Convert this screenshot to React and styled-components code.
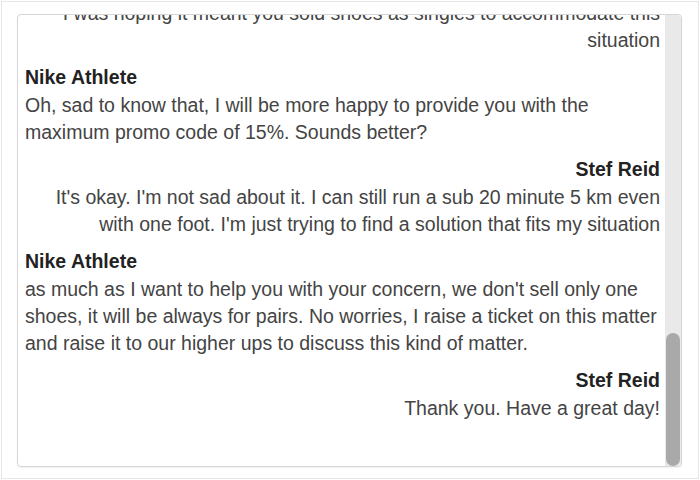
import React from 'react';
import styled, { createGlobalStyle } from 'styled-components';

const GlobalStyle = createGlobalStyle`
  html, body { margin: 0; padding: 0; background: #ffffff; }
  body { font-family: "Liberation Sans", Arial, sans-serif; }
`;

const Page = styled.div`
  box-sizing: border-box;
  width: 698px;
  height: 478px;
  margin: 1px;
  border: 1px solid #e6e6e6;
  padding: 12px 0 0 15px;
`;

const ChatBox = styled.div`
  box-sizing: border-box;
  width: 665px;
  height: 453px;
  border: 1px solid #d6d6d6;
  border-radius: 4px;
  box-shadow: 0 1px 2px rgba(0, 0, 0, 0.06);
  background: #fff;
  display: flex;
  overflow: hidden;
`;

const Log = styled.div`
  flex: 1;
  min-width: 0;
  overflow: hidden;
  padding: 0 5px 44px 7px;
  display: flex;
  flex-direction: column;
  justify-content: flex-end;
  gap: 10px;
`;

const ScrollTrack = styled.div`
  flex: 0 0 16px;
  background: #e9e9e9;
  display: flex;
  flex-direction: column;
  justify-content: flex-end;
  padding: 0 1px;
  box-sizing: border-box;
`;

const ScrollThumb = styled.div`
  height: ${p => p.$size}px;
  background: #a9a9a9;
  border-radius: 7px;
`;

const Message = styled.div`
  flex-shrink: 0;
  text-align: ${p => (p.$mine ? 'right' : 'left')};
  font-size: 19.5px;
  color: #444;
`;

const Sender = styled.div`
  font-weight: bold;
  color: #222;
  line-height: 27px;
  margin-bottom: 1px;
`;

const Body = styled.div`
  line-height: 27px;
`;

const messages = [
  { from: 'Nike Athlete', text: 'Hi, thank you for contacting Nike. My name is Jay. How can I help you today?' },
  { from: 'Stef Reid', text: "Hi Jay, I have a question about buying running shoes. I'm a below knee amputee, so I only need one shoe, the left one." },
  { from: 'Nike Athlete', text: 'Thank you for reaching out. May I know which style of shoe you are looking for?' },
  { from: 'Stef Reid', text: 'The Pegasus running shoes in a size 8, please.' },
  { from: 'Nike Athlete', text: "Thank you for waiting. I'm sorry to inform you that we are unable to sell a single shoe of that style." },
  { from: 'Stef Reid', text: "That's a shame. I read on your website about your commitment to athletes of all abilities." },
  { from: 'Stef Reid', text: 'I was hoping it meant you sold shoes as singles to accommodate this situation' },
  { from: 'Nike Athlete', text: 'Oh, sad to know that, I will be more happy to provide you with the maximum promo code of 15%. Sounds better?' },
  { from: 'Stef Reid', text: "It's okay. I'm not sad about it. I can still run a sub 20 minute 5 km even with one foot. I'm just trying to find a solution that fits my situation" },
  { from: 'Nike Athlete', text: "as much as I want to help you with your concern, we don't sell only one shoes, it will be always for pairs. No worries, I raise a ticket on this matter and raise it to our higher ups to discuss this kind of matter." },
  { from: 'Stef Reid', text: 'Thank you. Have a great day!' },
];

export default function App() {
  return (
    <>
      <GlobalStyle />
      <Page>
        <ChatBox>
          <Log>
            {messages.map((m, i) => (
              <Message key={i} $mine={m.from === 'Stef Reid'}>
                <Sender>{m.from}</Sender>
                <Body>{m.text}</Body>
              </Message>
            ))}
          </Log>
          <ScrollTrack>
            <ScrollThumb $size={133} />
          </ScrollTrack>
        </ChatBox>
      </Page>
    </>
  );
}
